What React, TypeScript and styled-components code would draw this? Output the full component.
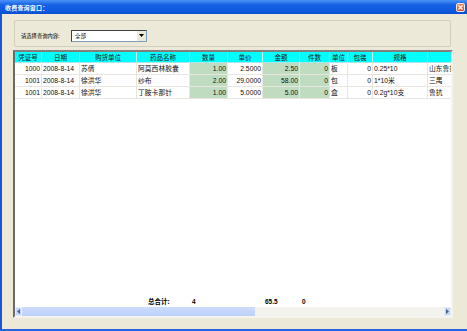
import React from "react"
import styled, { createGlobalStyle } from "styled-components"

const GlobalStyle = createGlobalStyle`
  html, body {
    margin: 0;
    padding: 0;
    background: #ffffff;
  }
  body {
    font-family: "Liberation Sans", "Noto Sans CJK SC", sans-serif;
  }
`

interface Column {
    title: string,
    width: number,
    align: "left" | "right" | "center",
    green?: boolean,
}

const columns: Column[] = [
    { title: "凭证号", width: 27, align: "right" },
    { title: "日期", width: 38, align: "left" },
    { title: "购货单位", width: 57, align: "left" },
    { title: "药品名称", width: 53, align: "left" },
    { title: "数量", width: 38, align: "right", green: true },
    { title: "单价", width: 35, align: "right" },
    { title: "金额", width: 37, align: "right", green: true },
    { title: "件数", width: 30, align: "right", green: true },
    { title: "单位", width: 18, align: "left" },
    { title: "包装", width: 25, align: "right" },
    { title: "规格", width: 55, align: "left" },
    { title: "生产厂家", width: 84, align: "left" },
]

const rows: string[][] = [
    ["1000", "2008-8-14", "苏倩", "阿莫西林胶囊", "1.00", "2.5000", "2.50", "0", "板", "0", "0.25*10", "山东鲁抗"],
    ["1001", "2008-8-14", "徐洪华", "纱布", "2.00", "29.0000", "58.00", "0", "包", "0", "1*10米", "三禺"],
    ["1001", "2008-8-14", "徐洪华", "丁胺卡那针", "1.00", "5.0000", "5.00", "0", "盒", "0", "0.2g*10支", "鲁抗"],
]

// footer values keyed by column index
const totals: Record<number, string> = { 3: "总合计:", 4: "4", 6: "65.5", 7: "0" }

const Window = styled.div`
    width: 467px;
    height: 331px;
    display: flex;
    flex-direction: column;
    background: #ece9d8;
    overflow: hidden;
`

const TitleBar = styled.div`
    height: 14px;
    flex-shrink: 0;
    display: flex;
    align-items: center;
    justify-content: space-between;
    padding: 0 2px 0 5px;
    background: linear-gradient(#4a93f7, #1560e4 35%, #0d58de 80%, #0a4ecf);
`

const Title = styled.div`
    color: #ffffff;
    font-family: "Noto Sans CJK SC", sans-serif;
    font-size: 6px;
    font-weight: bold;
    letter-spacing: 0.2px;
`

const CloseButton = styled.div`
    width: 9px;
    height: 9px;
    box-sizing: border-box;
    border: 1px solid #f4e6e0;
    border-radius: 2px;
    background: linear-gradient(#f08a60, #d8502a);
    display: flex;
    align-items: center;
    justify-content: center;
`

const Body = styled.div`
    flex: 1;
    display: flex;
    flex-direction: column;
    padding: 6px 0 0 11px;
    border-left: 2px solid #1a55d8;
    border-bottom: 2px solid #2a62e0;
`

const GroupBox = styled.div`
    width: 437px;
    height: 27px;
    margin-left: 1px;
    box-sizing: border-box;
    border: 1px solid #d0cfbf;
    border-radius: 2px;
    display: flex;
    align-items: center;
    padding: 4px 0 0 6px;
`

const Label = styled.span`
    font-family: "Noto Sans CJK SC", sans-serif;
    font-size: 5.3px;
    color: #000000;
    width: 50px;
`

const Select = styled.div`
    width: 76px;
    height: 12px;
    box-sizing: border-box;
    background: #ffffff;
    border: 1px solid #7f9db9;
    border-top-color: #404040;
    border-left-color: #404040;
    display: flex;
    align-items: center;
    justify-content: space-between;
    padding-left: 3px;
    font-family: "Noto Sans CJK SC", sans-serif;
    font-size: 5.5px;
`

const DropButton = styled.div`
    width: 9px;
    height: 10px;
    background: #ece9d8;
    border-left: 1px solid #ffffff;
    display: flex;
    align-items: center;
    justify-content: center;
`

const Grid = styled.div`
    width: 440px;
    height: 268px;
    margin-top: 3px;
    box-sizing: border-box;
    border: 2px solid;
    border-color: #808080 #f4f3ee #f4f3ee #6a6a6a;
    background: #ffffff;
    display: flex;
    flex-direction: column;
    overflow: hidden;
`

const Row = styled.div<{ $h: number }>`
    display: flex;
    height: ${p => p.$h}px;
    flex-shrink: 0;
`

const HeadCell = styled.div<{ $w: number }>`
    width: ${p => p.$w}px;
    flex-shrink: 0;
    box-sizing: border-box;
    background: #00ffff;
    border-right: 1px solid #c8f8f8;
    border-bottom: 1px solid #a8e8e8;
    font-family: "Noto Sans CJK SC", sans-serif;
    font-size: 6.5px;
    line-height: 10px;
    text-align: center;
    color: #101010;
    white-space: nowrap;
    overflow: hidden;
`

const Cell = styled.div<{ $w: number, $align: string, $green?: boolean }>`
    width: ${p => p.$w}px;
    flex-shrink: 0;
    box-sizing: border-box;
    background: ${p => p.$green ? "#c0dcc0" : "#ffffff"};
    border-right: 1px solid #e8e6de;
    border-bottom: 1px solid #e8e6de;
    font-size: 6.8px;
    line-height: 11px;
    text-align: ${p => p.$align};
    padding: ${p => p.$align === "right" ? "0 1px 0 0" : "0 0 0 1px"};
    color: #101010;
    white-space: nowrap;
    overflow: hidden;
`

const Spacer = styled.div`
    flex: 1;
`

const TotalCell = styled.div<{ $w: number }>`
    width: ${p => p.$w}px;
    flex-shrink: 0;
    padding-left: 2px;
    box-sizing: border-box;
    font-size: 6.5px;
    font-weight: bold;
    line-height: 11px;
    color: #000000;
    white-space: nowrap;
`

const TotalLabel = styled(TotalCell)`
    padding-left: 11px;
    font-family: "Noto Sans CJK SC", sans-serif;
`

const ScrollBar = styled.div`
    height: 9px;
    flex-shrink: 0;
    display: flex;
    background: #f3f2ec;
`

const ScrollArrow = styled.div`
    width: 7px;
    height: 9px;
    box-sizing: border-box;
    background: #c6d6f8;
    border: 1px solid #e6eefc;
    display: flex;
    align-items: center;
    justify-content: center;
`

const ScrollThumb = styled.div`
    width: 233px;
    height: 9px;
    background: linear-gradient(#cddcfc, #bcd0fa);
    border-radius: 1px;
`

const Arrow = ({ dir }: { dir: "left" | "right" | "down" }) => {
    const pts = dir === "left" ? "4,0 1,2.5 4,5" : dir === "right" ? "1,0 4,2.5 1,5" : "0,1 5,1 2.5,4"
    return <svg width="5" height="5" viewBox="0 0 5 5">
        <polygon points={pts} fill={dir === "down" ? "#000000" : "#4d6185"} />
    </svg>
}

export default function App() {
    return <>
        <GlobalStyle />
        <Window>
            <TitleBar>
                <Title>收费查询窗口：</Title>
                <CloseButton>
                    <svg width="5" height="5" viewBox="0 0 5 5">
                        <path d="M0.5 0.5 L4.5 4.5 M4.5 0.5 L0.5 4.5" stroke="#ffffff" strokeWidth="1.2" />
                    </svg>
                </CloseButton>
            </TitleBar>
            <Body>
                <GroupBox>
                    <Label>请选择查询内容:</Label>
                    <Select>
                        <span>全部</span>
                        <DropButton><Arrow dir="down" /></DropButton>
                    </Select>
                </GroupBox>
                <Grid>
                    <Row $h={11}>
                        {columns.map(c => <HeadCell key={c.title} $w={c.width}>{c.title}</HeadCell>)}
                    </Row>
                    {rows.map((r, i) =>
                        <Row $h={12} key={i}>
                            {r.map((v, j) =>
                                <Cell key={j} $w={columns[j].width} $align={columns[j].align} $green={columns[j].green}>{v}</Cell>
                            )}
                        </Row>
                    )}
                    <Spacer />
                    <Row $h={11}>
                        {columns.map((c, j) => j === 3
                            ? <TotalLabel key={j} $w={c.width}>{totals[j]}</TotalLabel>
                            : <TotalCell key={j} $w={c.width}>{totals[j] ?? ""}</TotalCell>
                        )}
                    </Row>
                    <ScrollBar>
                        <ScrollArrow><Arrow dir="left" /></ScrollArrow>
                        <ScrollThumb />
                        <Spacer />
                        <ScrollArrow><Arrow dir="right" /></ScrollArrow>
                    </ScrollBar>
                </Grid>
            </Body>
        </Window>
    </>
}
